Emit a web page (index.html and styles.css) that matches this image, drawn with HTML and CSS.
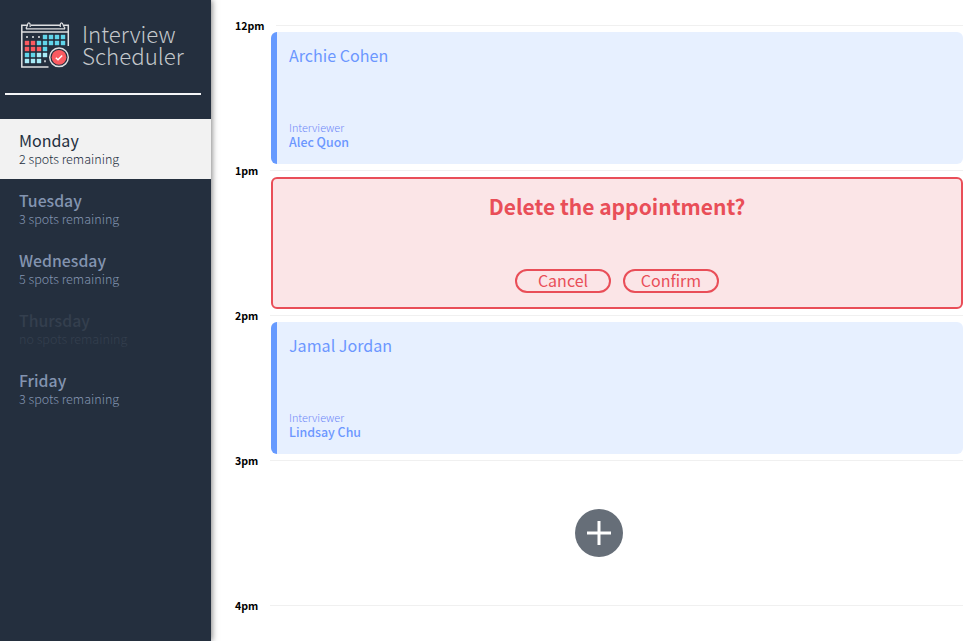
FILE: index.html
```html
<!DOCTYPE html>
<html lang="en">
<head>
<meta charset="utf-8">
<title>Interview Scheduler</title>
<link rel="stylesheet" href="styles.css">
</head>
<body>
<div class="layout">
  <aside class="sidebar">
    <div class="logo">
      <svg class="logo-icon" width="50" height="48" viewBox="20 21 50 48" fill="none">
        <path d="M48.5 66.9H21.8V25.3H28M31 25.3H60M63.5 25.3H68.3V46" stroke="#dedfe1" stroke-width="1.5"/>
        <path d="M22 32H68" stroke="#dedfe1" stroke-width="1.3"/>
        <path d="M26 28.8H65M26.3 29V27.6C27.6 27 27 22.8 28.7 22.8S30.2 25 30.2 27M64.7 29V27.6C63.4 27 63.1 22.8 61.6 22.8S60.3 25 60.3 27" stroke="#dedfe1" stroke-width="1.2"/>
        <path d="M26 36h2v2h-2zM32 36h2v2h-2zM38 36h2v2h-2zM44 60.300h2v2h-2z" fill="#b4b8bd"/>
        <path d="M43 35h4v4h-4zM49 35h4v4h-4zM55 35h4v4h-4zM61 35h4v4h-4zM37 41h4v4h-4zM43 41h4v4h-4zM49 41h4v4h-4zM55 41h4v4h-4zM61 41h4v4h-4zM43 47h4v4h-4zM25 53h4v4h-4zM31 53h4v4h-4z" fill="#62d5ea" stroke="#62d5ea" stroke-width=".4"/>
        <path d="M25 41h4v4h-4zM31 41h4v4h-4zM25 47h4v4h-4zM31 47h4v4h-4zM37 47h4v4h-4z" fill="#fa5a60" stroke="#fa5a60" stroke-width=".4"/>
        <path d="M37 53h4v4h-4zM43 53h4v4h-4zM25 59h4v4h-4zM31 59h4v4h-4zM37 59h4v4h-4z" fill="#a9ebf7" stroke="#a9ebf7" stroke-width=".4"/>
        <circle cx="59" cy="57.300" r="10.800" fill="#242f3e"/>
        <circle cx="59" cy="57.300" r="9.300" stroke="#dedfe1" stroke-width="1.500"/>
        <circle cx="59" cy="57.300" r="7.400" fill="#fa5a60"/>
        <path d="M55.800 57.800L58 59.800L62.200 55.500" stroke="#fff" stroke-width="1.500"/>
      </svg>
      <div class="logo-text"><span>Interview</span><span>Scheduler</span></div>
    </div>
    <hr class="divider">
    <nav class="days">
      <div class="day selected"><h2>Monday</h2><p>2 spots remaining</p></div>
      <div class="day"><h2>Tuesday</h2><p>3 spots remaining</p></div>
      <div class="day"><h2>Wednesday</h2><p>5 spots remaining</p></div>
      <div class="day full"><h2>Thursday</h2><p>no spots remaining</p></div>
      <div class="day"><h2>Friday</h2><p>3 spots remaining</p></div>
    </nav>
  </aside>
  <main class="schedule">
    <section class="slot">
      <header class="noon"><h4>12pm</h4><hr></header>
      <article class="card show">
        <h2>Archie Cohen</h2>
        <div><h4>Interviewer</h4><h3>Alec Quon</h3></div>
      </article>
    </section>
    <section class="slot">
      <header><h4>1pm</h4><hr></header>
      <article class="card confirm">
        <h1>Delete the appointment?</h1>
        <div class="actions"><button>Cancel</button><button>Confirm</button></div>
      </article>
    </section>
    <section class="slot">
      <header><h4>2pm</h4><hr></header>
      <article class="card show">
        <h2>Jamal Jordan</h2>
        <div><h4>Interviewer</h4><h3>Lindsay Chu</h3></div>
      </article>
    </section>
    <section class="slot">
      <header><h4>3pm</h4><hr></header>
      <article class="card add">
        <svg width="48" height="48" viewBox="0 0 48 48"><circle cx="24" cy="24" r="24" fill="#666e78"/><path d="M24 12V36M12 24H36" stroke="#fff" stroke-width="3"/></svg>
      </article>
    </section>
    <section class="slot last">
      <header><h4>4pm</h4><hr></header>
    </section>
  </main>
</div>
</body>
</html>
```
FILE: styles.css
```css
* { box-sizing: border-box; margin: 0; padding: 0; }
body {
  font-family: "Noto Sans CJK SC", "Noto Sans", sans-serif;
  background: #fff;
  overflow: hidden;
}
.layout { display: flex; height: 641px; }
.sidebar {
  width: 211px;
  flex: none;
  background: #242f3e;
  box-shadow: 1px 0 6px rgba(0, 0, 0, .5);
}
.logo { display: flex; height: 93px; padding: 21px 0 0 20px; }
.logo-icon { flex: none; }
.logo-text {
  margin: 1px 0 0 12px;
  font-size: 22.3px;
  font-weight: 300;
  line-height: 22px;
  color: #c3c7cb;
}
.logo-text span { display: block; }
.divider { height: 2px; margin: 0 10px 24px 5px; border: 0; background: #f5f6f7; }
.day { height: 60px; padding: 13px 19px 0; color: #8394b0; }
.day h2 { font-size: 15.8px; line-height: 18px; font-weight: 500; }
.day p { font-size: 12.55px; line-height: 18px; font-weight: 300; }
.day.selected { background: #f2f2f2; color: #242f3e; }
.day.selected h2 { margin-bottom: 2px; font-size: 16px; line-height: 16px; font-weight: 400; }
.day.full { color: #343f4e; }
.schedule { width: 728px; margin-left: 24px; padding-top: 16px; }
.slot { height: 145px; }
.slot.last { height: 36px; }
.slot header { display: flex; height: 16px; }
.slot header h4 { width: 35px; font-size: 10.6px; line-height: 20px; font-weight: 700; }
.slot header hr { flex: 1; height: 1px; margin-top: 9px; border: 0; background: #f0f0f0; }
.slot header.noon h4 { width: 41px; }
.card { display: flex; flex-direction: column; height: 132px; margin-left: 36px; border-radius: 6px; }
.show {
  justify-content: space-between;
  padding: 11px 12px 14px;
  border-left: 6px solid #669aff;
  background: #e7f0ff;
  color: #6c97ff;
}
.show h2 { font-size: 16.1px; line-height: 24px; font-weight: 400; }
.show h4 { margin-bottom: 1px; font-size: 10.8px; line-height: 14px; font-weight: 300; color: #7088f8; }
.show h3 { font-size: 12.4px; line-height: 15px; font-weight: 500; }
.confirm {
  align-items: center;
  justify-content: space-between;
  padding: 11px 0 14px;
  border: 2px solid #e94e58;
  background: #fbe5e7;
  color: #e94e58;
}
.confirm h1 { font-size: 21px; line-height: 32px; font-weight: 700; }
.actions { display: flex; gap: 12px; }
.actions button {
  width: 96px;
  height: 24px;
  padding-bottom: 2px;
  border: 2px solid #e94e58;
  border-radius: 12px;
  background: transparent;
  color: inherit;
  font: 400 16px/18px "Noto Sans CJK SC", sans-serif;
}
.add { align-items: center; justify-content: center; padding-right: 36px; }
```
